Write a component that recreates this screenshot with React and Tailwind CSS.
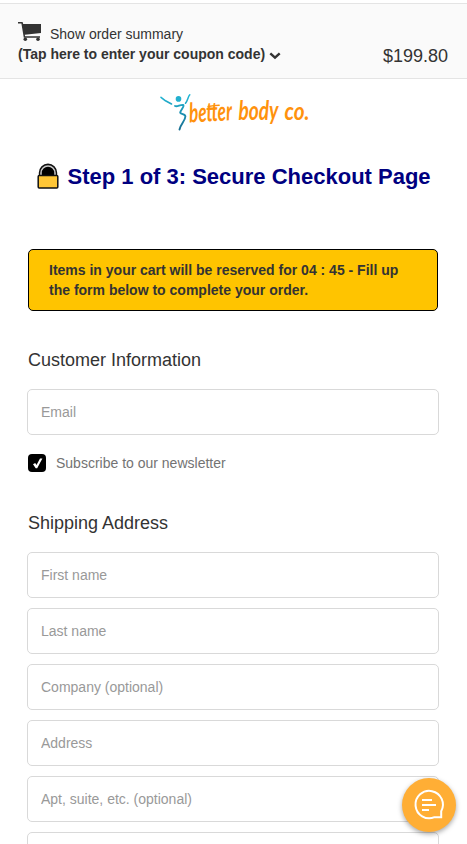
import React from "react";

function Cart() {
  return (
    <svg className="block h-5 w-6 shrink-0" viewBox="0 0 24 20" fill="#333">
      <path d="M0 0h4.600l.6 2H23v9L6.800 12.800l.3 1.400H22v1.500H5.800L3.400 1.500H0z" />
      <circle cx="7.300" cy="17.300" r="1.800" />
      <circle cx="20" cy="17.300" r="1.800" />
    </svg>
  );
}

function Logo() {
  return (
    <svg className="block h-[46px] w-[160px]" viewBox="0 0 160 46">
      <defs>
        <linearGradient id="figure" gradientUnits="userSpaceOnUse" x1="0" y1="6" x2="0" y2="41">
          <stop offset="0" stopColor="#22b8d6" />
          <stop offset="1" stopColor="#176d90" />
        </linearGradient>
      </defs>
      <circle cx="24.500" cy="9.900" r="2.800" fill="#22b0cf" />
      <g fill="none" stroke="url(#figure)" strokeLinecap="round" strokeLinejoin="round">
        <path d="M7 8.300 11.500 11.800l6 3.200" strokeWidth="1.600" />
        <path d="M35.800 5.800c-1.900 2-2 5.500-4.300 8.500" strokeWidth="1.500" />
        <path d="M21 17c2.500 1.100 5-1.600 8.300-1.100 1.400 2-2.800 5-3.100 7.800 1.200 1.800 5.200 1.300 5.200 3.800-.2 4.500-4.800 7.500-5.900 13" strokeWidth="1.900" />
      </g>
      <g fill="#ff920d" fontFamily="Lato, sans-serif" fontStyle="italic" fontWeight="700">
        <g transform="rotate(-3 36 34)">
          <text x="35.500" y="33.500" fontSize="27" textLength="43" lengthAdjust="spacingAndGlyphs">better</text>
          <path d="M55 18.500q6-1 11-.8" fill="none" stroke="#ff920d" strokeWidth="1.500" strokeLinecap="round" />
        </g>
        <text x="84.500" y="31" fontSize="26" textLength="40" lengthAdjust="spacingAndGlyphs">body</text>
        <text x="130.500" y="30.500" fontSize="24" textLength="25" lengthAdjust="spacingAndGlyphs">co.</text>
      </g>
    </svg>
  );
}

function Lock() {
  return (
    <svg className="block h-[26px] w-[22px] shrink-0" viewBox="0 0 22 26">
      <path d="M1.800 13V9.800a9.200 9.200 0 0 1 18.400 0V13z" fill="#111" />
      <path d="M4 12V10a7 7 0 0 1 14 0V12" fill="#000" stroke="#c9c9c9" strokeWidth="1.500" />
      <rect x="1.200" y="12.500" width="19.600" height="12.500" rx="1" fill="#ffc636" stroke="#111" strokeWidth="1.500" />
    </svg>
  );
}

function Field({ label }) {
  return (
    <input
      aria-label={label}
      placeholder={label}
      className="block h-[46px] w-full rounded-[5px] border border-[#d9d9d9] bg-white px-[13px] text-sm text-[#333] outline-none placeholder:text-[#999]"
    />
  );
}

const addressFields = ["First name", "Last name", "Company (optional)", "Address", "Apt, suite, etc. (optional)", "City"];

export default function App() {
  return (
    <div className="h-[844px] overflow-hidden bg-white font-['Liberation_Sans',Arial,sans-serif] text-[#333]">
      <header className="mt-[3px] flex h-[76px] justify-between border-y border-[#e4e4e4] bg-[#fafafa] pl-[18px] pr-[19px]">
        <div className="pt-[18px]">
          <div className="flex h-[22px] gap-2">
            <Cart />
            <span className="pt-[2px] text-sm leading-5">Show order summary</span>
          </div>
          <div className="flex items-center text-sm font-bold leading-[20px]">
            <span className="whitespace-nowrap">(Tap here to enter your coupon code)</span>
            <svg className="ml-1 mt-[3px] h-2 w-3" viewBox="0 0 12 8" fill="none" stroke="#333" strokeWidth="2.400">
              <path d="M1.300 1.300 6 5.700l4.700-4.400" />
            </svg>
          </div>
        </div>
        <div className="pt-[40px] text-lg leading-6">$199.80</div>
      </header>

      <div className="flex h-[61px] justify-center pt-[10px]">
        <Logo />
      </div>

      <main className="pl-[27px] pr-7">
        <h1 className="mt-[21px] flex h-[30px] items-center whitespace-nowrap pl-[10px] text-[22px] font-bold text-[#000080]">
          <Lock />
          <span className="ml-[8.500px]">Step 1 of 3: Secure Checkout Page</span>
        </h1>

        <div className="mx-px mt-[58px] h-[62px] whitespace-nowrap rounded-[5px] border border-black bg-[#ffc400] pl-5 pt-[10px] text-sm font-bold leading-5">
          Items in your cart will be reserved for 04 : 45 - Fill up
          <br />
          the form below to complete your order.
        </div>

        <h2 className="mb-[17px] ml-px mt-[37px] text-lg leading-6">Customer Information</h2>
        <Field label="Email" />
        <label className="ml-px mt-[18px] flex h-5 items-center gap-[10px] text-sm text-[#737373]">
          <span className="flex size-[18px] items-center justify-center rounded-[4px] bg-black">
            <svg className="h-[11px] w-[11px]" viewBox="0 0 11 11">
              <path d="M1 6.200 3.200 5l1.300 2L8 .5h2.400L5.200 10.200H3.700z" fill="#fff" />
            </svg>
          </span>
          Subscribe to our newsletter
        </label>

        <h2 className="mb-[17px] ml-px mt-[38px] text-lg leading-6">Shipping Address</h2>
        <div className="flex flex-col gap-[10px]">
          {addressFields.map((label) => (
            <Field key={label} label={label} />
          ))}
        </div>
      </main>

      <button aria-label="Chat" className="fixed left-[402px] top-[778px] size-[54px] rounded-full bg-[#ffae35] shadow-[0_2px_5px_rgba(0,0,0,0.35)]">
        <svg className="block size-[54px]" viewBox="0 0 54 54" fill="none" stroke="#fff" strokeWidth="2">
          <path d="M39.200 39.300H34.500L32.500 39.200A13.700 13.700 0 1 1 39.200 33.200z" />
          <path d="M20 22h10M20 27h14M20 32h7" />
        </svg>
      </button>
    </div>
  );
}
